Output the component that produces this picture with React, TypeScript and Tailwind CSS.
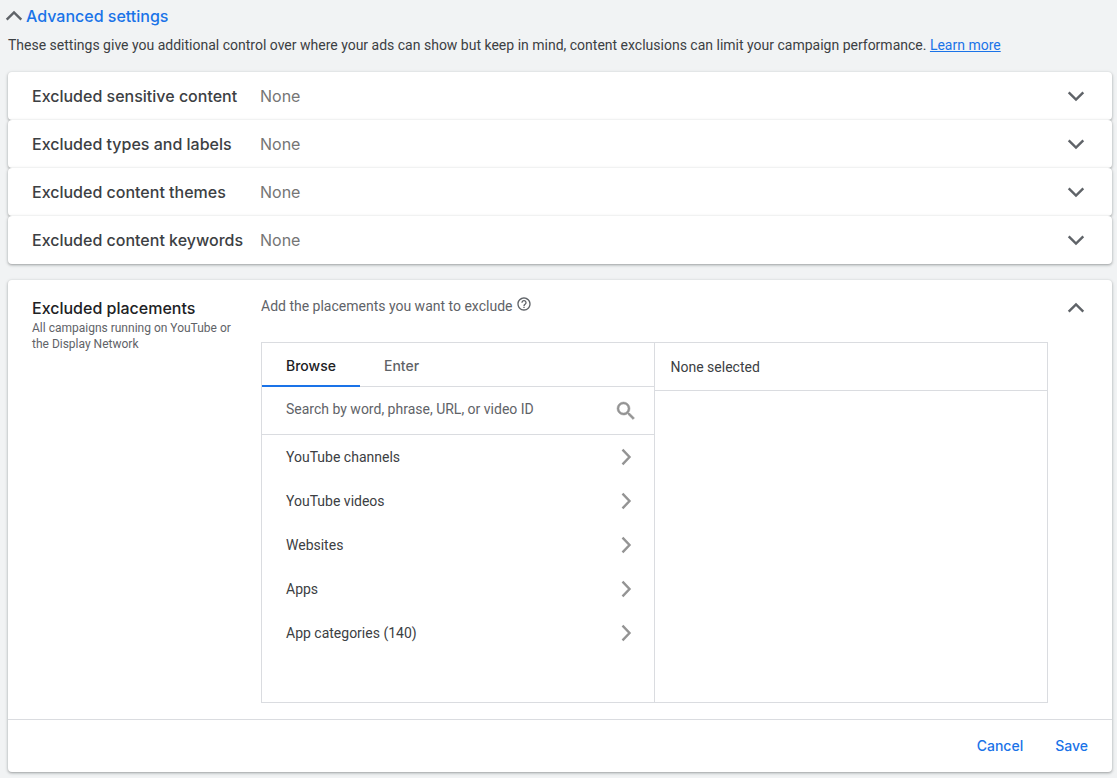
import { useState } from "react";

const heading = "font-['Inter','Liberation_Sans',sans-serif]";

type Direction = "up" | "down" | "right";

const chevronPoints: Record<Direction, string> = {
  up: "4.700,15.700 12,8.400 19.300,15.700",
  down: "4.700,8.300 12,15.600 19.300,8.300",
  right: "8.500,4.700 15.500,12 8.500,19.300",
};

function Chevron({ direction, className }: { direction: Direction; className: string }) {
  return (
    <svg viewBox="0 0 24 24" fill="none" stroke="currentColor" strokeWidth="2.4" className={`size-6 shrink-0 ${className}`} aria-hidden="true">
      <polyline points={chevronPoints[direction]} />
    </svg>
  );
}

const exclusions = [
  "Excluded sensitive content",
  "Excluded types and labels",
  "Excluded content themes",
  "Excluded content keywords",
];

const sources = ["YouTube channels", "YouTube videos", "Websites", "Apps", "App categories (140)"];

function ExclusionRow({ title }: { title: string }) {
  return (
    <button
      type="button"
      className={`flex h-12 w-full items-center rounded bg-white px-6 text-left text-base shadow-[0_1px_2px_rgba(60,64,67,0.3),0_1px_3px_1px_rgba(60,64,67,0.15)] ${heading}`}
    >
      <span className="w-57 shrink-0 font-medium whitespace-nowrap text-[#3c4043]">{title}</span>
      <span className="flex-1 text-[#757575]">None</span>
      <Chevron direction="down" className="text-[#5f6368]" />
    </button>
  );
}

function PlacementPicker() {
  const [tab, setTab] = useState("Browse");
  return (
    <div className="grid grid-cols-2 border border-[#dadce0]">
      <div className="border-r border-[#dadce0] pb-[47px]">
        <div role="tablist" className="flex h-11 border-b border-[#dadce0]">
          {["Browse", "Enter"].map((name) => (
            <button
              key={name}
              type="button"
              role="tab"
              aria-selected={tab === name}
              onClick={() => setTab(name)}
              className={`-mb-px border-b-2 px-6 pt-1 text-sm font-medium ${heading} ${
                tab === name ? "border-[#1a73e8] text-[#202124]" : "border-transparent text-[#5f6368]"
              }`}
            >
              {name}
            </button>
          ))}
        </div>
        <div className="flex h-12 items-center border-b border-[#dadce0] pr-4 pl-6">
          <input
            type="search"
            aria-label="Search placements"
            placeholder="Search by word, phrase, URL, or video ID"
            className="min-w-0 flex-1 pb-1 outline-none placeholder:text-[#5f6368]"
          />
          <svg viewBox="0 0 24 24" fill="currentColor" stroke="currentColor" strokeWidth="0.5" className="size-6 shrink-0 text-[#949494]" aria-hidden="true">
            <path d="M15.5 14h-.79l-.28-.27A6.471 6.471 0 0 0 16 9.500 6.500 6.500 0 1 0 9.500 16c1.610 0 3.090-.590 4.230-1.570l.270.280v.790l5 4.990L20.490 19l-4.990-5zm-6 0C7.010 14 5 11.990 5 9.500S7.010 5 9.500 5 14 7.010 14 9.500 11.990 14 9.500 14z" />
          </svg>
        </div>
        <ul>
          {sources.map((source) => (
            <li key={source}>
              <button type="button" className="flex h-11 w-full items-center justify-between pr-4 pl-6 text-left text-[#3c4043]">
                {source}
                <Chevron direction="right" className="text-[#949494]" />
              </button>
            </li>
          ))}
        </ul>
      </div>
      <div>
        <p className="flex h-12 items-center border-b border-[#dadce0] px-4 text-[#3c4043]">None selected</p>
      </div>
    </div>
  );
}

export default function App() {
  return (
    <main className="min-h-screen bg-[#f1f3f4] pt-1 pr-[5px] pb-1 pl-2 font-['Roboto','Liberation_Sans',sans-serif] text-sm">
      <button type="button" className={`-ml-1.5 flex h-6 items-center text-base font-medium text-[#1a73e8] ${heading}`}>
        <Chevron direction="up" className="text-[#5f6368]" />
        Advanced settings
      </button>
      <p className="mt-[7px] text-[#3c4043]">
        These settings give you additional control over where your ads can show but keep in mind, content exclusions can limit your campaign
        performance.{" "}
        <a href="#learn-more" className="text-[#1a73e8] underline">
          Learn more
        </a>
      </p>

      <section className="mt-[17px]">
        {exclusions.map((title) => (
          <ExclusionRow key={title} title={title} />
        ))}
      </section>

      <section className="mt-4 rounded bg-white shadow-[0_1px_2px_rgba(60,64,67,0.3),0_1px_3px_1px_rgba(60,64,67,0.15)]">
        <div className="flex pt-4 pr-6 pb-4 pl-6">
          <div className="w-[229px] shrink-0">
            <h2 className={`text-base font-medium text-[#202124] ${heading}`}>Excluded placements</h2>
            <p className="pr-4 text-xs text-[#5f6368]">All campaigns running on YouTube or the Display Network</p>
          </div>
          <div className="min-w-0 flex-1">
            <p className="mb-[26px] flex items-start gap-1 text-[#5f6368]">
              Add the placements you want to exclude
              <svg viewBox="0 0 24 24" fill="currentColor" className="size-4" aria-hidden="true">
                <path d="M11 18h2v-2h-2v2zm1-16C6.480 2 2 6.480 2 12s4.480 10 10 10 10-4.480 10-10S17.520 2 12 2zm0 18c-4.410 0-8-3.590-8-8s3.590-8 8-8 8 3.590 8 8-3.590 8-8 8zm0-14c-2.210 0-4 1.790-4 4h2c0-1.100.900-2 2-2s2 .900 2 2c0 2-3 1.750-3 5h2c0-2.250 3-2.500 3-5 0-2.210-1.790-4-4-4z" />
              </svg>
            </p>
            <PlacementPicker />
          </div>
          <button type="button" aria-label="Collapse excluded placements" className="ml-4 self-start">
            <Chevron direction="up" className="text-[#5f6368]" />
          </button>
        </div>
        <div className={`flex h-[53px] items-center justify-end gap-8 border-t border-[#dadce0] px-6 font-medium text-[#1a73e8] ${heading}`}>
          <button type="button">Cancel</button>
          <button type="button">Save</button>
        </div>
      </section>
    </main>
  );
}
